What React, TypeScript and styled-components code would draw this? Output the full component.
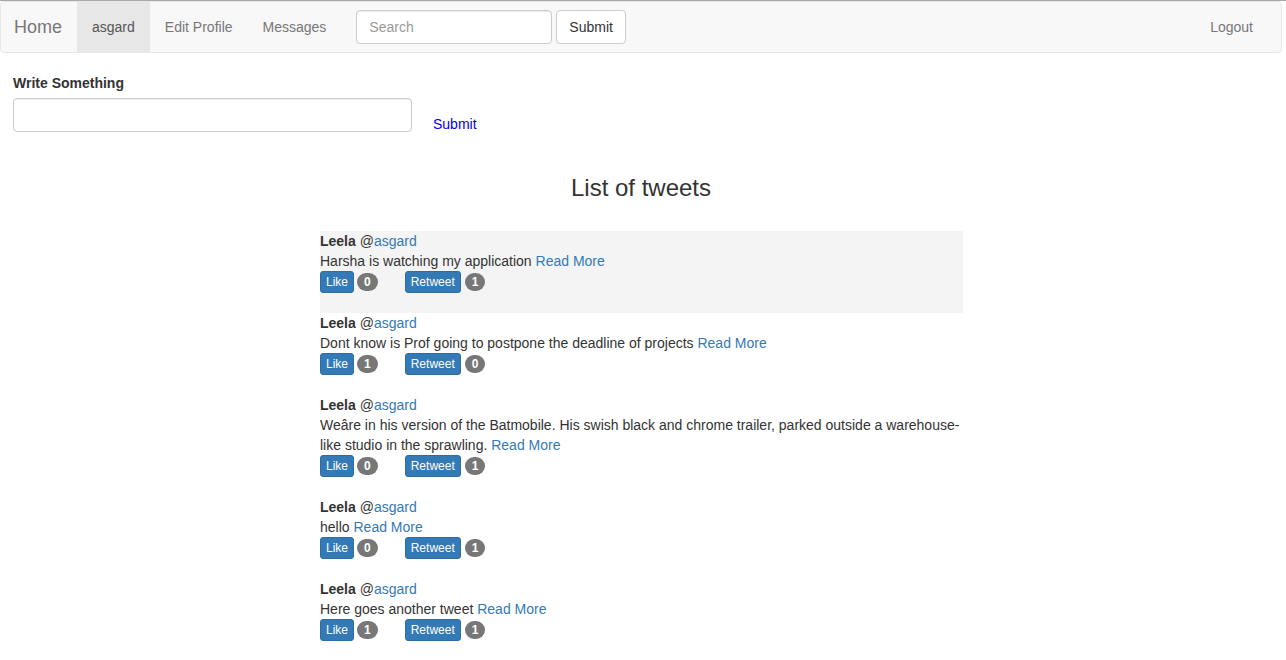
import React from "react";
import styled, { createGlobalStyle } from "styled-components";

const GlobalStyle = createGlobalStyle`
  html, body { margin: 0; padding: 0; background: #fff; }
  body {
    font-family: "Liberation Sans", Arial, Helvetica, sans-serif;
    font-size: 14px;
    line-height: 20px;
    color: #333;
  }
  * { box-sizing: border-box; }
`;

const Page = styled.div`
  border-top: 1px solid #a8a8a8;
`;

const Navbar = styled.nav`
  display: flex;
  align-items: flex-start;
  height: 52px;
  margin-right: 4px;
  background: #f8f8f8;
  border: 1px solid #e7e7e7;
  border-radius: 4px;
  margin-bottom: 20px;
`;

const Brand = styled.a`
  display: block;
  height: 50px;
  padding: 15px 15px 15px 13px;
  font-size: 18px;
  line-height: 20px;
  color: #777;
  text-decoration: none;
`;

const NavLink = styled.a<{ $active?: boolean }>`
  display: block;
  padding: 15px 15px;
  line-height: 20px;
  color: ${(p) => (p.$active ? "#555" : "#777")};
  background: ${(p) => (p.$active ? "#e7e7e7" : "transparent")};
  text-decoration: none;
`;

const NavForm = styled.form`
  display: flex;
  gap: 4px;
  padding: 0 15px;
  margin-top: 8px;
`;

const Input = styled.input<{ $w: number }>`
  width: ${(p) => p.$w}px;
  height: 34px;
  padding: 6px 12px;
  font-family: inherit;
  font-size: 14px;
  color: #555;
  background: #fff;
  border: 1px solid #ccc;
  border-radius: 4px;
  box-shadow: inset 0 1px 1px rgba(0, 0, 0, 0.075);
  &::placeholder { color: #999; }
`;

const DefaultButton = styled.button`
  height: 34px;
  padding: 6px 12px;
  font-family: inherit;
  font-size: 14px;
  line-height: 20px;
  color: #333;
  background: #fff;
  border: 1px solid #ccc;
  border-radius: 4px;
`;

const Spacer = styled.div`
  flex: 1;
`;

const LogoutLink = styled(NavLink)`
  margin-right: 13px;
`;

const PostSection = styled.div`
  padding: 0 13px;
`;

const Label = styled.label`
  display: block;
  font-weight: bold;
  margin-bottom: 5px;
`;

const PostRow = styled.div`
  display: flex;
  align-items: flex-start;
  gap: 8px;
`;

const LinkButton = styled.button`
  margin-top: 9px;
  height: 34px;
  padding: 6px 12px;
  font-family: inherit;
  font-size: 14px;
  line-height: 20px;
  color: #0000ee;
  background: transparent;
  border: 1px solid transparent;
`;

const Heading = styled.h3`
  margin: 34px 0 0;
  padding-right: 4px;
  font-size: 24px;
  font-weight: 500;
  line-height: 26px;
  text-align: center;
`;

const TweetList = styled.div`
  width: 643px;
  margin: 30px 0 0 320px;
`;

const Tweet = styled.div<{ $hl?: boolean }>`
  padding-bottom: 20px;
  background: ${(p) => (p.$hl ? "#f4f4f4" : "transparent")};
`;

const Name = styled.strong`
  font-weight: bold;
`;

const Link = styled.a`
  color: #337ab7;
  text-decoration: none;
`;

const Actions = styled.div`
  display: flex;
  align-items: center;
  height: 22px;
`;

const SmallButton = styled.button<{ $gap?: number }>`
  height: 22px;
  padding: 1px 5px;
  margin-left: ${(p) => p.$gap ?? 0}px;
  font-family: inherit;
  font-size: 12px;
  line-height: 18px;
  color: #fff;
  background: #337ab7;
  border: 1px solid #2e6da4;
  border-radius: 3px;
`;

const Badge = styled.span<{ $gap?: number }>`
  display: inline-block;
  min-width: 10px;
  margin-left: ${(p) => p.$gap ?? 3}px;
  padding: 3px 7px;
  font-size: 12px;
  font-weight: bold;
  line-height: 12px;
  color: #fff;
  text-align: center;
  background: #777;
  border-radius: 10px;
`;

type TweetData = { text: string; likes: number; retweets: number };

const tweets: TweetData[] = [
  { text: "Harsha is watching my application", likes: 0, retweets: 1 },
  { text: "Dont know is Prof going to postpone the deadline of projects", likes: 1, retweets: 0 },
  {
    text:
      "Weâre in his version of the Batmobile. His swish black and chrome trailer, parked outside a warehouse-like studio in the sprawling.",
    likes: 0,
    retweets: 1,
  },
  { text: "hello", likes: 0, retweets: 1 },
  { text: "Here goes another tweet", likes: 1, retweets: 1 },
];

export default function App() {
  return (
    <Page>
      <GlobalStyle />
      <Navbar>
        <Brand href="#">Home</Brand>
        <NavLink href="#" $active>asgard</NavLink>
        <NavLink href="#">Edit Profile</NavLink>
        <NavLink href="#">Messages</NavLink>
        <NavForm onSubmit={(e) => e.preventDefault()}>
          <Input $w={196} placeholder="Search" />
          <DefaultButton type="submit">Submit</DefaultButton>
        </NavForm>
        <Spacer />
        <LogoutLink href="#">Logout</LogoutLink>
      </Navbar>
      <PostSection>
        <Label>Write Something</Label>
        <PostRow>
          <Input $w={399} />
          <LinkButton>Submit</LinkButton>
        </PostRow>
      </PostSection>
      <Heading>List of tweets</Heading>
      <TweetList>
        {tweets.map((t, i) => (
          <Tweet key={i} $hl={i === 0}>
            <div>
              <Name>Leela</Name> @<Link href="#">asgard</Link>
            </div>
            <div>
              {t.text} <Link href="#">Read More</Link>
            </div>
            <Actions>
              <SmallButton>Like</SmallButton>
              <Badge>{t.likes}</Badge>
              <SmallButton $gap={27}>Retweet</SmallButton>
              <Badge $gap={4}>{t.retweets}</Badge>
            </Actions>
          </Tweet>
        ))}
      </TweetList>
    </Page>
  );
}
